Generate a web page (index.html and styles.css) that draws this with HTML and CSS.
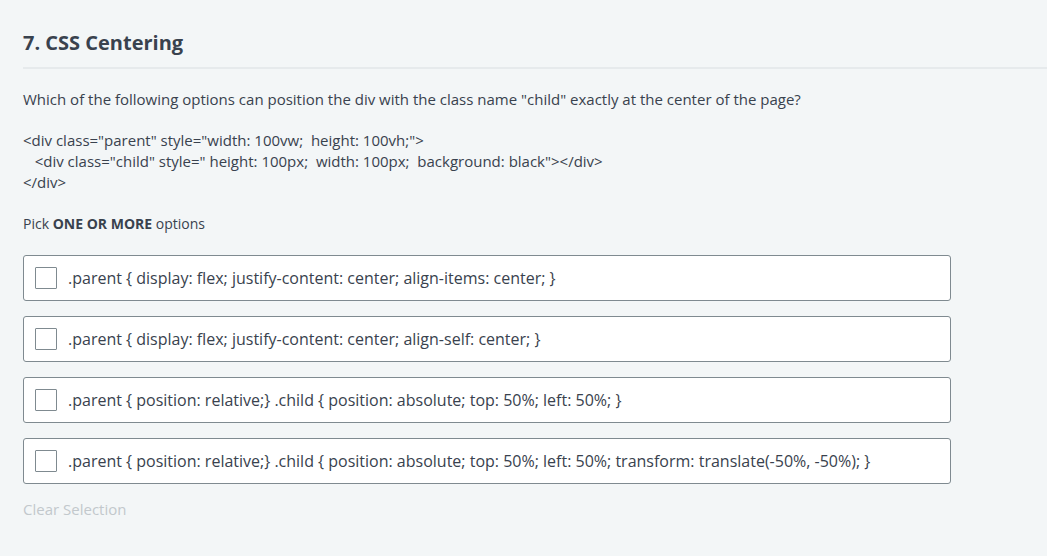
FILE: index.html
```html
<!DOCTYPE html>
<html>
<head>
<meta charset="utf-8">
<link rel="stylesheet" href="styles.css">
</head>
<body>
<div class="page">
  <h1 class="title">7. CSS Centering</h1>
  <div class="question">
    <p class="q-text">Which of the following options can position the div with the class name "child" exactly at the center of the page?<br><br>&lt;div class="parent" style="width: 100vw;&nbsp; height: 100vh;"&gt;<br>&nbsp;&nbsp; &lt;div class="child" style=" height: 100px;&nbsp; width: 100px;&nbsp; background: black"&gt;&lt;/div&gt;<br>&lt;/div&gt;</p>
    <p class="pick">Pick <b>ONE OR MORE</b> options</p>
    <div class="options">
      <label class="option"><span class="box"></span><span class="opt-text">.parent { display: flex; justify-content: center; align-items: center; }</span></label>
      <label class="option"><span class="box"></span><span class="opt-text">.parent { display: flex; justify-content: center; align-self: center; }</span></label>
      <label class="option"><span class="box"></span><span class="opt-text">.parent { position: relative;} .child { position: absolute; top: 50%; left: 50%; }</span></label>
      <label class="option"><span class="box"></span><span class="opt-text">.parent { position: relative;} .child { position: absolute; top: 50%; left: 50%; transform: translate(-50%, -50%); }</span></label>
    </div>
    <div class="clear">Clear Selection</div>
  </div>
</div>
</body>
</html>
```
FILE: styles.css
```css
html, body {
  margin: 0;
  padding: 0;
  background: #f3f6f7;
}
body {
  font-family: "Open Sans", "Liberation Sans", sans-serif;
  color: #39424e;
  width: 1047px;
  height: 556px;
  overflow: hidden;
}
.page {
  padding-top: 30px;
  padding-left: 23px;
}
.title {
  margin: 0;
  font-size: 20px;
  font-weight: 700;
  line-height: 26px;
  color: #39424e;
  padding-bottom: 11px;
  border-bottom: 2px solid #e6eaec;
}
.question {
  padding-top: 20px;
}
.q-text {
  margin: 0;
  font-size: 15px;
  line-height: 20.7px;
  color: #39424e;
}
.pick {
  margin: 21px 0 0;
  font-size: 14px;
  line-height: 20px;
}
.pick b {
  font-weight: 700;
}
.options {
  margin-top: 21px;
  display: flex;
  flex-direction: column;
  gap: 15px;
  width: 928px;
}
.option {
  display: flex;
  align-items: center;
  height: 44px;
  background: #fff;
  border: 1px solid #7f8a90;
  border-radius: 3px;
  padding-left: 11px;
}
.box {
  width: 20px;
  height: 20px;
  border: 1px solid #7f8a90;
  border-radius: 1px;
  background: #fff;
  flex: none;
}
.opt-text {
  margin-left: 11px;
  font-size: 16px;
  color: #39424e;
}
.clear {
  margin-top: 15px;
  font-size: 15px;
  line-height: 20px;
  color: #c2c8cc;
}
```
